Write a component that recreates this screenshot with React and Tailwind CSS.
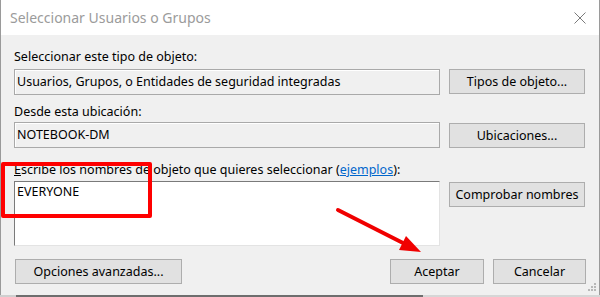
import React from 'react';

function Field({ children }) {
  return (
    <div className="flex h-[26px] w-[426px] items-center border border-[#a9a9a9] bg-[#f0f0f0] pl-[2px] shadow-[inset_1px_1px_0_#ffffff]">
      {children}
    </div>
  );
}

function Button({ className = '', children }) {
  return (
    <button className={`flex h-[25px] items-center justify-center border border-[#adadad] bg-[#e1e1e1] text-black ${className}`}>
      {children}
    </button>
  );
}

export default function App() {
  return (
    <div className="relative h-[297px] w-[600px] overflow-hidden bg-[#f0f0f0] font-['Noto_Sans','Liberation_Sans',sans-serif] text-[12.5px] leading-[16px] text-black">
      <div className="flex h-[295px] flex-col border-x border-[#9a9a9a]">
        {/* title bar */}
        <div className="flex h-[35px] shrink-0 items-center justify-between bg-white pl-[9px] pr-[13px]">
          <span className="text-[14px] text-[#9b9b9b]">Seleccionar Usuarios o Grupos</span>
          <svg width="12" height="12" viewBox="0 0 12 12" className="mt-[1px]">
            <path d="M0.5 0.5 L11.5 11.5 M11.5 0.5 L0.5 11.5" stroke="#7a7a7a" strokeWidth="1" />
          </svg>
        </div>

        <div className="flex flex-1 flex-col px-[13px] pt-[14px]">
          <div className="h-[16px]">Seleccionar este tipo de objeto:</div>
          <div className="mt-[4px] flex gap-[9px]">
            <Field>Usuarios, Grupos, o Entidades de seguridad integradas</Field>
            <Button className="w-[136px]">Tipos de objeto...</Button>
          </div>

          <div className="mt-[9px] h-[16px]">Desde esta ubicación:</div>
          <div className="mt-[2px] flex gap-[9px]">
            <Field>NOTEBOOK-DM</Field>
            <Button className="mt-[1px] w-[136px]">Ubicaciones...</Button>
          </div>

          <div className="mt-[14px] h-[16px]">
            <span className="underline">E</span>scribe los nombres de objeto que quieres seleccionar (
            <span className="text-[#0066cc] underline">ejemplos</span>):
          </div>
          <div className="mt-[3px] flex gap-[9px]">
            <div className="h-[65px] w-[426px] border border-b-[#e3e3e3] border-l-[#7a7a7a] border-r-[#e3e3e3] border-t-[#7a7a7a] bg-white pl-[2px] pt-[2px]">
              EVERYONE
            </div>
            <Button className="mt-[1px] w-[136px]">Comprobar nombres</Button>
          </div>

          <div className="mt-[13px] flex items-start">
            <Button className="ml-[1px] h-[24px] w-[167px]">Opciones avanzadas...</Button>
            <div className="ml-auto flex gap-[9px]">
              <Button className="h-[24px] w-[94px]">Aceptar</Button>
              <Button className="h-[24px] w-[93px]">Cancelar</Button>
            </div>
          </div>
        </div>
      </div>

      {/* strip of the window behind */}
      <div className="flex h-[2px]">
        <div className="w-[16px] bg-[#cfcfcf]" />
        <div className="w-[407px] bg-[#6e6e6e]" />
        <div className="flex-1 bg-[#d6d6d6]" />
      </div>

      {/* resize grip */}
      <svg className="absolute right-[3px] top-[282px]" width="10" height="10" viewBox="0 0 10 10">
        <rect x="7" y="1" width="2" height="2" fill="#b8b8b8" />
        <rect x="4" y="4" width="2" height="2" fill="#b8b8b8" />
        <rect x="7" y="4" width="2" height="2" fill="#b8b8b8" />
        <rect x="1" y="7" width="2" height="2" fill="#b8b8b8" />
        <rect x="4" y="7" width="2" height="2" fill="#b8b8b8" />
        <rect x="7" y="7" width="2" height="2" fill="#b8b8b8" />
      </svg>

      {/* annotations */}
      <div className="pointer-events-none absolute left-[1px] top-[162px] h-[56px] w-[151px] rounded-[2px] border-[4px] border-[#ff0000]" />
      <svg className="pointer-events-none absolute left-0 top-0" width="600" height="297" viewBox="0 0 600 297">
        <line x1="338" y1="210" x2="405" y2="244" stroke="#f00000" strokeWidth="4" strokeLinecap="round" />
        <polygon points="421,252 399,250 406,236" fill="#f00000" />
      </svg>
    </div>
  );
}
